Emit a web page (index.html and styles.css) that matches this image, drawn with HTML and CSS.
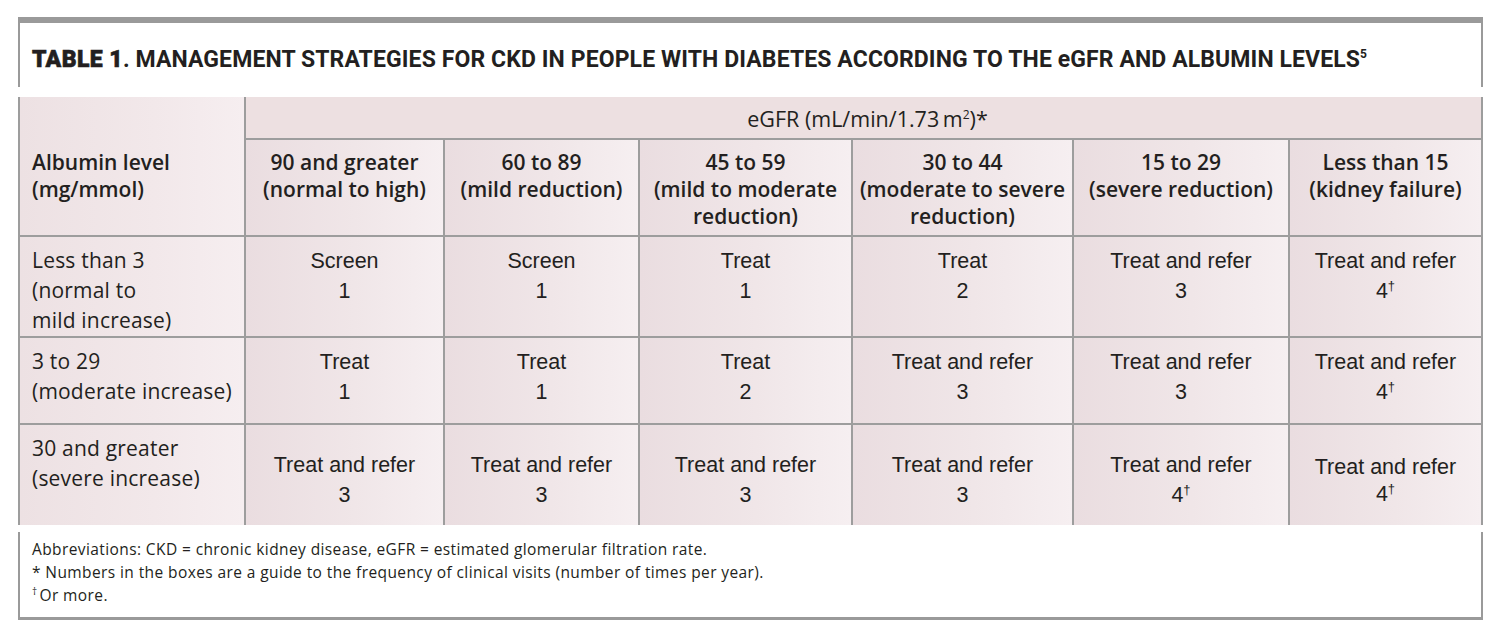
FILE: index.html
```html
<!DOCTYPE html>
<html lang="en">
<head>
<meta charset="utf-8">
<title>Table 1</title>
<link rel="stylesheet" href="styles.css">
</head>
<body>
<div class="figure">
  <div class="title-box">
    <h1 class="title"><span class="label">TABLE 1</span>. MANAGEMENT STRATEGIES FOR CKD IN PEOPLE WITH DIABETES ACCORDING TO THE eGFR AND ALBUMIN LEVELS<sup>5</sup></h1>
  </div>
  <div class="grid">
    <div class="cell corner">Albumin level<br>(mg/mmol)</div>
    <div class="cell egfr">eGFR (mL/min/1.73&#8201;m<sup>2</sup>)*</div>

    <div class="cell head">90 and greater<br>(normal to high)</div>
    <div class="cell head">60 to 89<br>(mild reduction)</div>
    <div class="cell head">45 to 59<br>(mild to moderate<br>reduction)</div>
    <div class="cell head">30 to 44<br>(moderate to severe<br>reduction)</div>
    <div class="cell head">15 to 29<br>(severe reduction)</div>
    <div class="cell head">Less than 15<br>(kidney failure)</div>

    <div class="cell rowlabel">Less than 3<br>(normal to<br>mild increase)</div>
    <div class="cell body">Screen<br>1</div>
    <div class="cell body">Screen<br>1</div>
    <div class="cell body">Treat<br>1</div>
    <div class="cell body">Treat<br>2</div>
    <div class="cell body">Treat and refer<br>3</div>
    <div class="cell body">Treat and refer<br>4<sup class="dag">†</sup></div>

    <div class="cell rowlabel">3 to 29<br>(moderate increase)</div>
    <div class="cell body">Treat<br>1</div>
    <div class="cell body">Treat<br>1</div>
    <div class="cell body">Treat<br>2</div>
    <div class="cell body">Treat and refer<br>3</div>
    <div class="cell body">Treat and refer<br>3</div>
    <div class="cell body">Treat and refer<br>4<sup class="dag">†</sup></div>

    <div class="cell rowlabel">30 and greater<br>(severe increase)</div>
    <div class="cell body low">Treat and refer<br>3</div>
    <div class="cell body low">Treat and refer<br>3</div>
    <div class="cell body low">Treat and refer<br>3</div>
    <div class="cell body low">Treat and refer<br>3</div>
    <div class="cell body low">Treat and refer<br>4<sup class="dag">†</sup></div>
    <div class="cell body lower">Treat and refer<br>4<sup class="dag">†</sup></div>
  </div>
  <div class="notes">
    <p>Abbreviations: CKD = chronic kidney disease, eGFR = estimated glomerular filtration rate.</p>
    <p>* Numbers in the boxes are a guide to the frequency of clinical visits (number of times per year).</p>
    <p><sup class="ndag">†</sup>Or more.</p>
  </div>
</div>
</body>
</html>
```
FILE: styles.css
```css
html, body {
  margin: 0;
  padding: 0;
  background: #ffffff;
}

body {
  color: #231f20;
  font-family: "Open Sans", "Liberation Sans", sans-serif;
}

.figure {
  width: 1465px;
  margin: 17px 0 0 18px;
}

/* Title */
.title-box {
  border-top: 6px solid #9a9a9a;
  border-left: 2px solid #9a9a9a;
  border-right: 2px solid #9a9a9a;
  padding: 24px 0 0 12px;
  height: 40px;
}

.title {
  margin: 0;
  font-family: Roboto, "Liberation Sans", sans-serif;
  font-weight: 700;
  font-size: 23px;
  line-height: 26px;
  letter-spacing: 0.1px;
  color: #231f20;
  white-space: nowrap;
}

.title .label {
  font-weight: 900;
  letter-spacing: 0.4px;
  -webkit-text-stroke: 0.6px #231f20;
}

.title sup {
  font-size: 12px;
  line-height: 0;
  vertical-align: 9px;
}

/* Grid table */
.grid {
  margin-top: 10px;
  display: grid;
  grid-template-columns: 224px 197px 193px 211px 219px 214px 191px;
  grid-template-rows: 41px 95px 99px 85px 100px;
  gap: 2px;
  background: #9d9d9d;
  border-left: 2px solid #9d9d9d;
  border-right: 2px solid #9d9d9d;
}

.cell {
  background: linear-gradient(to right, #eaddE0 0%, #f0e6e8 55%, #f6eff1 100%);
  box-sizing: border-box;
}

.corner {
  grid-row: 1 / 3;
  grid-column: 1;
  padding: 52px 0 0 12px;
  font-weight: 600;
  font-size: 21px;
  line-height: 27px;
  background: linear-gradient(to right, #ede1e3 0%, #f2e8ea 60%, #f6eef0 100%);
}

.egfr {
  grid-row: 1;
  grid-column: 2 / 8;
  background: #ede0e1;
  text-align: center;
  font-weight: 500;
  font-size: 21.5px;
  line-height: 27px;
  padding-top: 8px;
  padding-left: 8px;
}

.egfr sup {
  font-size: 12px;
  line-height: 0;
  vertical-align: 8px;
}

.head {
  text-align: center;
  font-weight: 600;
  font-size: 21px;
  line-height: 27px;
  padding-top: 9px;
}

.rowlabel {
  padding: 8px 0 0 12px;
  font-size: 21px;
  line-height: 30px;
  font-weight: 400;
  letter-spacing: 0.2px;
  background: linear-gradient(to right, #ede1e3 0%, #f2e8ea 60%, #f6eef0 100%);
}

.body {
  text-align: center;
  font-family: "Liberation Sans", Arial, sans-serif;
  font-size: 21.5px;
  line-height: 30px;
  padding-top: 9px;
}

.body.low {
  padding-top: 25px;
}

.body.lower {
  padding-top: 29px;
  line-height: 27px;
}

.dag {
  font-size: 13px;
  line-height: 0;
  vertical-align: 8px;
}

/* Notes */
.notes {
  margin-top: 7px;
  border-left: 2px solid #9a9a9a;
  border-right: 2px solid #9a9a9a;
  border-bottom: 3px solid #9a9a9a;
  padding: 6px 0 10px 12px;
  font-size: 15.5px;
  line-height: 23px;
  letter-spacing: 0.4px;
}

.notes p {
  margin: 0;
}

.ndag {
  font-size: 10px;
  line-height: 0;
  vertical-align: 6px;
  margin-right: 2px;
}
```
